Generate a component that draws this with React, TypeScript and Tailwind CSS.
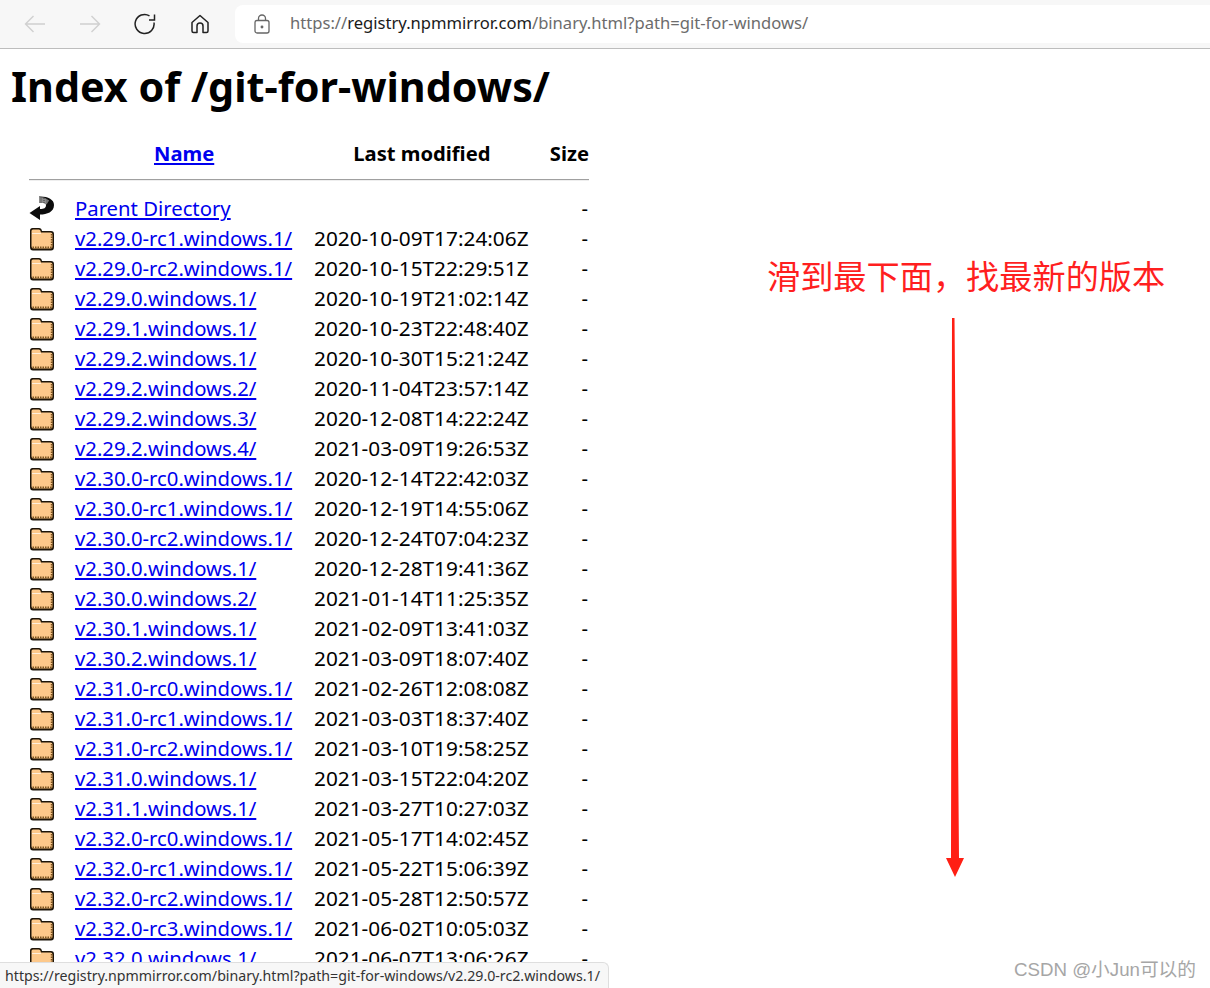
import React from 'react';

const rows: [string, string][] = [
  ['v2.29.0-rc1.windows.1/', '2020-10-09T17:24:06Z'],
  ['v2.29.0-rc2.windows.1/', '2020-10-15T22:29:51Z'],
  ['v2.29.0.windows.1/', '2020-10-19T21:02:14Z'],
  ['v2.29.1.windows.1/', '2020-10-23T22:48:40Z'],
  ['v2.29.2.windows.1/', '2020-10-30T15:21:24Z'],
  ['v2.29.2.windows.2/', '2020-11-04T23:57:14Z'],
  ['v2.29.2.windows.3/', '2020-12-08T14:22:24Z'],
  ['v2.29.2.windows.4/', '2021-03-09T19:26:53Z'],
  ['v2.30.0-rc0.windows.1/', '2020-12-14T22:42:03Z'],
  ['v2.30.0-rc1.windows.1/', '2020-12-19T14:55:06Z'],
  ['v2.30.0-rc2.windows.1/', '2020-12-24T07:04:23Z'],
  ['v2.30.0.windows.1/', '2020-12-28T19:41:36Z'],
  ['v2.30.0.windows.2/', '2021-01-14T11:25:35Z'],
  ['v2.30.1.windows.1/', '2021-02-09T13:41:03Z'],
  ['v2.30.2.windows.1/', '2021-03-09T18:07:40Z'],
  ['v2.31.0-rc0.windows.1/', '2021-02-26T12:08:08Z'],
  ['v2.31.0-rc1.windows.1/', '2021-03-03T18:37:40Z'],
  ['v2.31.0-rc2.windows.1/', '2021-03-10T19:58:25Z'],
  ['v2.31.0.windows.1/', '2021-03-15T22:04:20Z'],
  ['v2.31.1.windows.1/', '2021-03-27T10:27:03Z'],
  ['v2.32.0-rc0.windows.1/', '2021-05-17T14:02:45Z'],
  ['v2.32.0-rc1.windows.1/', '2021-05-22T15:06:39Z'],
  ['v2.32.0-rc2.windows.1/', '2021-05-28T12:50:57Z'],
  ['v2.32.0-rc3.windows.1/', '2021-06-02T10:05:03Z'],
];

const FolderIcon = () => (
  <svg width="26" height="24" viewBox="0 0 26 24">
    <path d="M1 7 V3.500 Q1 1 3.500 1 H10 Q12.500 1 13 4 H22 Q25 4 25 7 V20 Q25 23.500 22 23.500 H4 Q1 23.500 1 20 Z" fill="#1d1408" />
    <path d="M2.500 7 V4 Q2.500 2.500 4 2.500 H10 Q11.500 2.500 12 5.500 H21.500 Q23.500 5.500 23.500 7.500 V19.500 Q23.500 21.500 21.500 21.500 H4.500 Q2.500 21.500 2.500 19.500 Z" fill="#fdc88a" />
    <path d="M3 6.500 H12" stroke="#ffeeda" strokeWidth="1" fill="none" />
    <path d="M3.500 20.500 H23.500 M22.800 7 V20.500" stroke="#7d5420" strokeWidth="2" strokeDasharray="1.500 1" fill="none" />
  </svg>
);

const BackIcon = () => (
  <svg width="26" height="26" viewBox="0 0 26 26">
    <path d="M10 0.500 C18 0 25 3 25 9 C25 16 18 18.500 11 18.500 V24 L0.500 17 L11 10 V13 C15 13 17 12 17 9 C17 7 14 6.500 10 6.500 Z" fill="#0c0c0c" />
    <path d="M10 1 C14 1 17 2 20 4.500 L17.500 8.500 C15 7 13 6.500 10 6.500 Z" fill="#8c8c8c" />
    <path d="M12 1.500V6.500M15 2V7M18 3.500V8" stroke="#3a3a3a" strokeWidth="1" strokeDasharray="1 1" />
  </svg>
);

const App: React.FC = () => {
  return (
    <div className="relative h-[988px] w-[1210px] overflow-hidden bg-white font-['Noto_Sans',sans-serif] text-black">
      {/* browser toolbar */}
      <div className="flex h-[49px] items-center border-b border-[#bdbdbd] bg-[#f7f7f7]">
        <div className="ml-[24px] flex w-[22px] justify-center text-[#d0d0d0]">
          <svg width="22" height="18" viewBox="0 0 22 18" fill="none" stroke="currentColor" strokeWidth="1.400"><path d="M21 9H1.500M9.500 1L1.500 9l8 8" /></svg>
        </div>
        <div className="ml-[33px] flex w-[22px] justify-center text-[#d0d0d0]">
          <svg width="22" height="18" viewBox="0 0 22 18" fill="none" stroke="currentColor" strokeWidth="1.400"><path d="M1 9h19.500M12.500 1l8 8-8 8" /></svg>
        </div>
        <div className="ml-[33px] flex w-[22px] justify-center text-[#222]">
          <svg width="22" height="22" viewBox="0 0 22 22" fill="none" stroke="currentColor" strokeWidth="1.500"><path d="M20 9.500A9.500 9.500 0 1 1 15.500 2.800" /><path d="M20.500 1.500V7H15" /></svg>
        </div>
        <div className="ml-[33px] flex w-[22px] justify-center text-[#222]">
          <svg width="20" height="20" viewBox="0 0 20 20" fill="none" stroke="currentColor" strokeWidth="1.500" strokeLinejoin="round"><path d="M2 8.500L10 1.500l8 7V17a1.500 1.500 0 0 1-1.500 1.500H13V12a3 3 0 0 0-6 0v6.500H3.500A1.500 1.500 0 0 1 2 17Z" /></svg>
        </div>
        <div className="ml-[24px] flex h-[38px] flex-1 items-center rounded-l-[8px] bg-white">
          <svg className="ml-[19px]" width="16" height="20" viewBox="0 0 16 20" fill="none" stroke="#666" strokeWidth="1.300"><rect x="1" y="6.500" width="14" height="12.500" rx="2" /><path d="M4.500 6.500V4.500a3.500 3.500 0 0 1 7 0v2" /><circle cx="8" cy="13" r="0.800" fill="#666" /></svg>
          <span className="mb-[1px] ml-[20px] text-[16.600px] leading-none whitespace-nowrap text-[#6c6c6c]">
            https://<span className="text-[#1a1a1a]">registry.npmmirror.com</span>/binary.html?path=git-for-windows/
          </span>
        </div>
      </div>

      {/* directory listing */}
      <h1 className="mt-[11px] ml-[11px] text-[41.300px] leading-[52px] font-bold">Index of /git-for-windows/</h1>

      <div className="mt-[26px] ml-[29px] w-[560px] text-[20.300px]">
        <div className="flex h-[30px] items-center text-[20.200px] font-bold">
          <a href="#" className="ml-[125px] text-[#0000ee] underline">Name</a>
          <span className="ml-[139px]">Last modified</span>
          <span className="ml-auto">Size</span>
        </div>
        <div className="mt-[11px] mb-[13px] h-[2px] border-t border-b border-t-[#a0a0a0] border-b-[#eeeeee]" />
        <div className="flex h-[30px] items-center">
          <div className="w-[46px]"><BackIcon /></div>
          <a href="#" className="mb-[1px] text-[#0000ee] underline">Parent Directory</a>
          <span className="mr-[1px] mb-[1px] ml-auto">-</span>
        </div>
        {rows.map(([name, date]) => (
          <div key={name} className="flex h-[30px] items-center">
            <div className="w-[46px]"><FolderIcon /></div>
            <a href="#" className="mb-[1px] w-[239px] text-[#0000ee] underline">{name}</a>
            <span className="text-[20.800px]">{date}</span>
            <span className="mr-[1px] mb-[1px] ml-auto">-</span>
          </div>
        ))}
        <div className="flex h-[30px] items-center">
          <div className="w-[46px]"><FolderIcon /></div>
          <a href="#" className="mb-[1px] w-[239px] text-[#0000ee] underline">v2.32.0.windows.1/</a>
          <span className="text-[20.800px]">2021-06-07T13:06:26Z</span>
          <span className="mr-[1px] mb-[1px] ml-auto">-</span>
        </div>
      </div>

      {/* annotation over the page */}
      <div className="absolute top-[253px] left-[767px] font-['Noto_Sans_CJK_SC',sans-serif] text-[33.200px] leading-[44px] whitespace-nowrap text-[#ff1f1f]">
        滑到最下面，找最新的版本
      </div>
      <svg className="absolute top-[317px] left-[944px]" width="22" height="562" viewBox="0 0 22 562">
        <path d="M8 1H10.500L15 541L20 541L11 560L2 541L7 541Z" fill="#ff1f14" />
      </svg>

      {/* link status bubble */}
      <div className="absolute bottom-0 left-0 flex h-[26px] items-center rounded-tr-[6px] border-t border-r border-[#dedede] bg-[#f7f7f7] pr-[8px] pl-[5px] text-[14.200px] whitespace-nowrap text-[#333]">
        https://registry.npmmirror.com/binary.html?path=git-for-windows/v2.29.0-rc2.windows.1/
      </div>

      {/* watermark */}
      <div className="absolute top-[958px] left-[1014px] font-['Liberation_Sans','Noto_Sans_CJK_SC',sans-serif] text-[18.700px] leading-[24px] whitespace-nowrap text-[#a6a6a6]">
        CSDN @小Jun可以的
      </div>
    </div>
  );
};

export default App;
